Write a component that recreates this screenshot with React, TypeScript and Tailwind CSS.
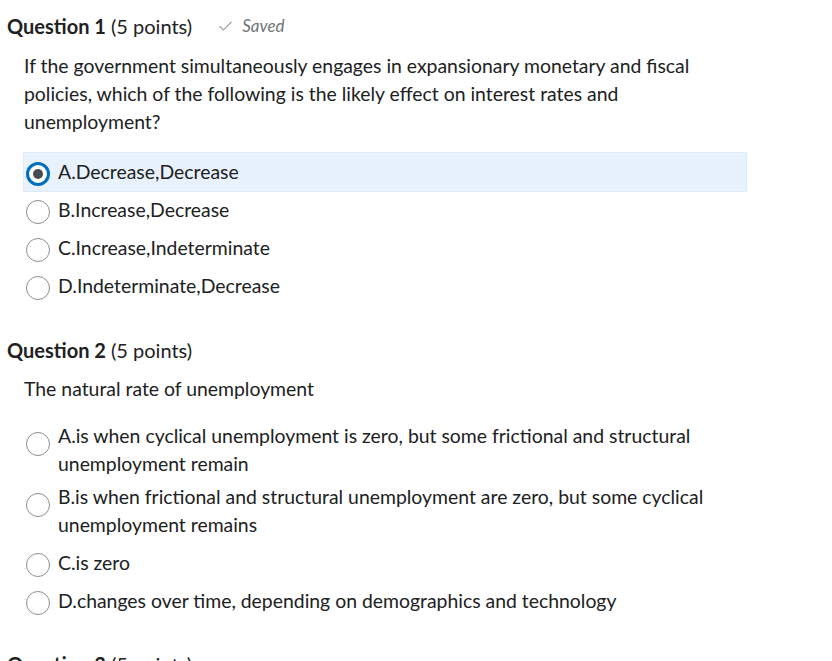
import { Check } from "lucide-react";

type Opt = { label: string; selected?: boolean; multi?: boolean; tight?: boolean };

const q1: Opt[] = [
  { label: "A.Decrease,Decrease", selected: true },
  { label: "B.Increase,Decrease" },
  { label: "C.Increase,Indeterminate" },
  { label: "D.Indeterminate,Decrease" },
];

const q2: Opt[] = [
  { label: "A.is when cyclical unemployment is zero, but some frictional and structural unemployment remain", multi: true, tight: true },
  { label: "B.is when frictional and structural unemployment are zero, but some cyclical unemployment remains", multi: true },
  { label: "C.is zero" },
  { label: "D.changes over time, depending on demographics and technology" },
];

function Radio({ checked, multi }: { checked?: boolean; multi?: boolean }) {
  const top = multi ? "mt-[10px]" : "mt-[4px]";
  return checked ? (
    <span className={`${top} flex h-[24px] w-[24px] shrink-0 items-center justify-center rounded-full border-[3px] border-[#006fbf] bg-white`}>
      <span className="h-[10px] w-[10px] rounded-full bg-[#494c4e]" />
    </span>
  ) : (
    <span className={`${top} h-[24px] w-[24px] shrink-0 rounded-full border border-[#8a8e91] bg-white`} />
  );
}

function Option({ opt }: { opt: Opt }) {
  return (
    <div
      className={`flex items-start gap-[8px] pl-[2px] pr-[40px] pt-[5px] ${opt.tight ? "pb-0" : "pb-[5px]"} ${
        opt.selected ? "bg-[#e8f2fc] ring-1 ring-[#dfeaf7]" : ""
      }`}
    >
      <Radio checked={opt.selected} multi={opt.multi} />
      <span className="leading-[28px]">{opt.label}</span>
    </div>
  );
}

export default function App() {
  return (
    <div className="h-[661px] w-[832px] overflow-hidden bg-white text-[19.4px] text-[#202122] [font-family:Lato,'Noto_Sans',sans-serif]">
      {/* Question 1 */}
      <section className="pt-[12px]">
        <div className="flex items-center gap-[25px] pl-[7px]">
          <h2 className="text-[20px] leading-[28px]">
            <span className="font-bold">Question 1</span> (5 points)
          </h2>
          <span className="flex items-center gap-[8px] text-[17px] italic text-[#6e7376]">
            <Check size={17} strokeWidth={1.5} className="text-[#9a9fa3]" />
            Saved
          </span>
        </div>
        <p className="mt-[12px] w-[720px] pl-[24px] leading-[28px]">
          If the government simultaneously engages in expansionary monetary and fiscal policies, which of the following
          is the likely effect on interest rates and unemployment?
        </p>
        <div className="mt-[17px] ml-[24px] flex w-[722px] flex-col">
          {q1.map((o) => (
            <Option key={o.label} opt={o} />
          ))}
        </div>
      </section>

      {/* Question 2 */}
      <section className="pt-[31px]">
        <h2 className="pl-[7px] text-[20px] leading-[28px]">
          <span className="font-bold">Question 2</span> (5 points)
        </h2>
        <p className="mt-[11px] pl-[24px] leading-[28px]">The natural rate of unemployment</p>
        <div className="mt-[14px] ml-[24px] flex w-[722px] flex-col">
          {q2.map((o) => (
            <Option key={o.label} opt={o} />
          ))}
        </div>
      </section>

      {/* Question 3 */}
      <section className="pt-[30px]">
        <h2 className="pl-[7px] text-[20px] leading-[28px]">
          <span className="font-bold">Question 3</span> (5 points)
        </h2>
      </section>
    </div>
  );
}
